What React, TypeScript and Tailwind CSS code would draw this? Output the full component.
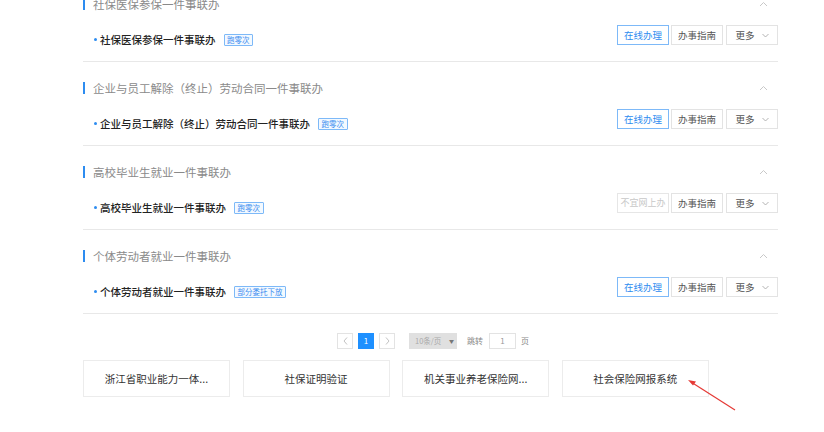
import React from "react";

type Sec = { title: string; badge: string; online: boolean };

const sections: Sec[] = [
  { title: "社保医保参保一件事联办", badge: "跑零次", online: true },
  { title: "企业与员工解除（终止）劳动合同一件事联办", badge: "跑零次", online: true },
  { title: "高校毕业生就业一件事联办", badge: "跑零次", online: false },
  { title: "个体劳动者就业一件事联办", badge: "部分委托下放", online: true },
];

const font = { fontFamily: '"Noto Sans CJK SC", "Noto Sans", sans-serif' };

function Section({ s }: { s: Sec }) {
  return (
    <div className="border-b border-[#e8e8e8] h-[84px]">
      <div className="pt-[18px] flex items-center h-[34px]">
        <div className="w-[2px] h-[12px] bg-[#2d8cf0]" />
        <div className="ml-[8px] text-[11.5px] leading-[16px] text-[#8a8a8a]">{s.title}</div>
        <div className="ml-auto mr-[10px]">
          <svg width="9" height="6" viewBox="0 0 9 6">
            <path d="M1 5 L4.5 1.5 L8 5" fill="none" stroke="#c8c8c8" strokeWidth="1" />
          </svg>
        </div>
      </div>
      <div className="mt-[13px] flex items-center h-[20px]">
        <div className="flex items-center pt-[9px]">
          <div className="ml-[11px] w-[3px] h-[3px] rounded-full bg-[#2d8cf0]" />
          <div className="ml-[3px] text-[10.5px] leading-[14px] text-[#222] font-medium">{s.title}</div>
          <div className="ml-[8px] border border-[#7db9f8] bg-[#f3f9ff] text-[#3d8ef0] text-[7.5px] leading-[8px] px-[2.5px] py-[1px] rounded-[1px]">
            {s.badge}
          </div>
        </div>
        <div className="ml-auto flex gap-[2px]">
          {s.online ? (
            <div className="w-[52px] h-[20px] border border-[#7db9f8] text-[#2d8cf0] text-[9.5px] flex items-center justify-center">
              在线办理
            </div>
          ) : (
            <div className="w-[52px] h-[20px] border border-[#e6e6e6] text-[#c8c8c8] text-[9px] flex items-center justify-center">
              不宜网上办
            </div>
          )}
          <div className="w-[52px] h-[20px] border border-[#e3e3e3] text-[#555] text-[9.5px] flex items-center justify-center">
            办事指南
          </div>
          <div className="ml-[1px] w-[52px] h-[20px] border border-[#e3e3e3] text-[#555] text-[9.5px] flex items-center justify-center gap-[7px]">
            <span>更多</span>
            <svg width="7" height="5" viewBox="0 0 7 5">
              <path d="M0.5 1 L3.5 4 L6.5 1" fill="none" stroke="#aaa" strokeWidth="0.9" />
            </svg>
          </div>
        </div>
      </div>
    </div>
  );
}

export default function App() {
  const cards = ["浙江省职业能力一体...", "社保证明验证", "机关事业养老保险网...", "社会保险网报系统"];
  return (
    <div className="w-[824px] h-[432px] bg-white overflow-hidden relative" style={font}>
      <div className="ml-[83px] w-[695px] -mt-[22px]">
        {sections.map((s, i) => (
          <Section key={i} s={s} />
        ))}
        <div className="mt-[19px] flex items-center h-[16px] ml-[254px] text-[8px] text-[#888]">
          <div className="w-[16px] h-[16px] border border-[#e3e3e3] flex items-center justify-center">
            <svg width="5" height="8" viewBox="0 0 5 8">
              <path d="M4 0.5 L1 4 L4 7.5" fill="none" stroke="#bbb" strokeWidth="0.9" />
            </svg>
          </div>
          <div className="ml-[5px] w-[16px] h-[16px] bg-[#1e90ff] text-white flex items-center justify-center">1</div>
          <div className="ml-[5px] w-[16px] h-[16px] border border-[#e3e3e3] flex items-center justify-center">
            <svg width="5" height="8" viewBox="0 0 5 8">
              <path d="M1 0.5 L4 4 L1 7.5" fill="none" stroke="#bbb" strokeWidth="0.9" />
            </svg>
          </div>
          <div className="ml-[14px] w-[48px] h-[16px] bg-[#e0e0e0] text-[#aaa] flex items-center pl-[6px] pr-[3px] justify-between">
            <span className="text-[7.5px]">10条/页</span>
            <span className="text-[5px] text-[#777]">▼</span>
          </div>
          <div className="ml-[10px]">跳转</div>
          <div className="ml-[6px] w-[27px] h-[16px] border border-[#e3e3e3] flex items-center justify-center text-[#999]">1</div>
          <div className="ml-[5px]">页</div>
        </div>
        <div className="mt-[11px] flex gap-[12.6px]">
          {cards.map((c, i) => (
            <div
              key={i}
              className="w-[147px] h-[37px] border border-[#ececec] flex items-center justify-center text-[10.5px] text-[#333]"
            >
              {c}
            </div>
          ))}
        </div>
      </div>
      <svg className="absolute left-0 top-0" width="824" height="432" viewBox="0 0 824 432">
        <line x1="735" y1="410" x2="691" y2="382" stroke="#e53935" strokeWidth="1.2" />
        <path d="M688 380 L696 381.5 L693 385.5 Z" fill="#e53935" />
      </svg>
    </div>
  );
}
